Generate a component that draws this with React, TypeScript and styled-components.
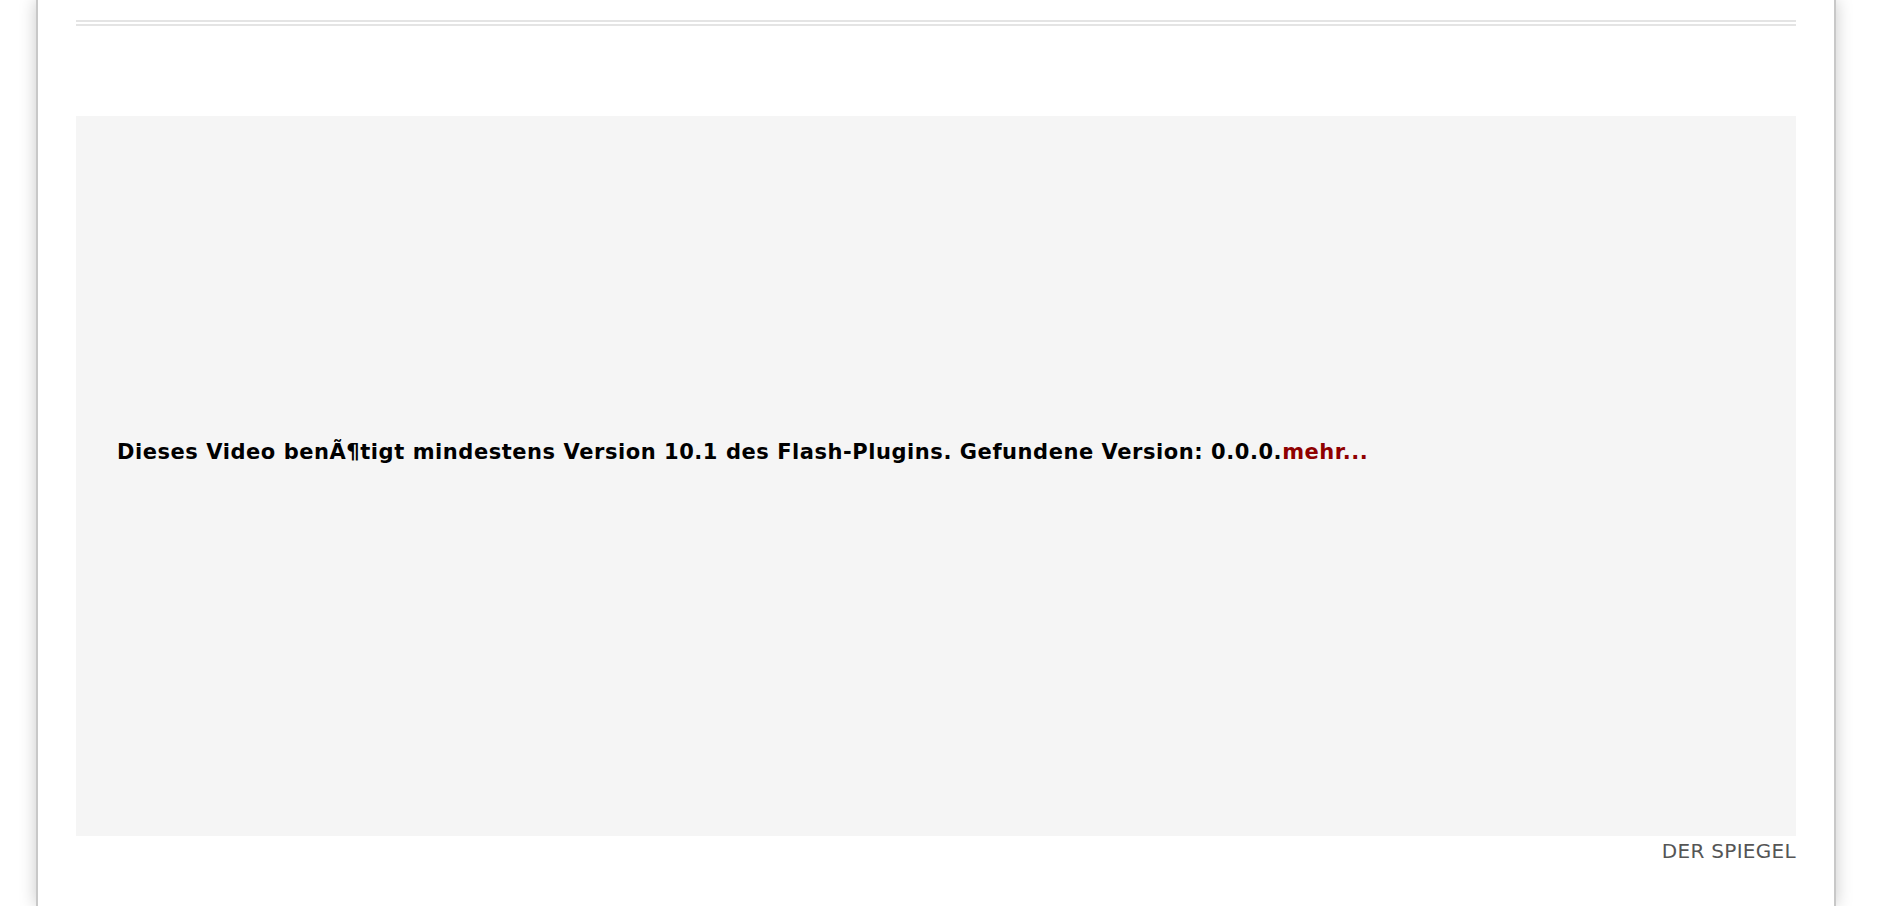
import React from "react";
import styled, { createGlobalStyle } from "styled-components";

const Global = createGlobalStyle`
  html, body { margin: 0; padding: 0; background: #fff; }
  body { font-family: "DejaVu Sans", Verdana, sans-serif; overflow: hidden; }
`;

const Page = styled.div`
  margin: 0 0 0 36px;
  border-left: 2px solid #c8c8c8;
  border-right: 2px solid #c8c8c8;
  box-shadow: 0 0 16px rgba(0, 0, 0, 0.22);
  background: #fff;
  padding: 20px 38px 0 38px;
  box-sizing: border-box;
  width: 1800px;
  min-height: 100vh;
`;

const Rule = styled.div`
  border-bottom: 6px double #e4e4e4;
  height: 0;
`;

const Player = styled.div`
  margin-top: 90px;
  height: 720px;
  background: #f5f5f5;
  display: flex;
  align-items: flex-start;
  padding: 323px 0 0 41px;
  box-sizing: border-box;
`;

const Notice = styled.p`
  margin: 0;
  font-family: "DejaVu Sans", Verdana, sans-serif;
  font-weight: bold;
  font-size: 21px;
  letter-spacing: 0.55px;
  line-height: 26px;
  color: #000;
`;

const More = styled.a`
  color: #8f0000;
  text-decoration: none;
`;

const Credit = styled.div`
  text-align: right;
  font-size: 20px;
  letter-spacing: 0.3px;
  line-height: 24px;
  color: #555;
  margin-top: 3px;
`;

export default function App() {
  return (
    <>
      <Global />
      <Page>
        <Rule />
        <Player>
          <Notice>
            Dieses Video benÃ¶tigt mindestens Version 10.1 des Flash-Plugins. Gefundene Version: 0.0.0.
            <More href="#">mehr...</More>
          </Notice>
        </Player>
        <Credit>DER SPIEGEL</Credit>
      </Page>
    </>
  );
}
